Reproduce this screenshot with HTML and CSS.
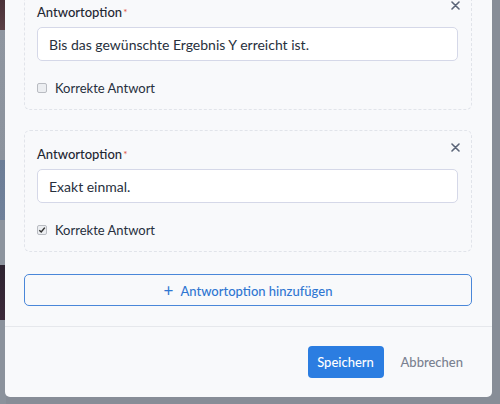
FILE: index.html
```html
<!DOCTYPE html>
<html lang="de">
<head>
    <meta charset="UTF-8">
    <meta name="viewport" content="width=device-width, initial-scale=1.0">
    <title>Antwortoptionen</title>
    <link rel="stylesheet" href="styles.css">
</head>
<body>
    <div class="modal">
        <div class="modal-body">
            <div class="option">
                <button class="remove" type="button">
                    <svg width="9" height="9" viewBox="0 0 9 9"><path d="M1 1L8 8M8 1L1 8" stroke="#5b6578" stroke-width="1.6" stroke-linecap="round"/></svg>
                </button>
                <label class="field-label">Antwortoption<span class="req">*</span></label>
                <input type="text" class="field" value="Bis das gewünschte Ergebnis Y erreicht ist.">
                <label class="check">
                    <span class="box"></span>Korrekte Antwort
                </label>
            </div>
            <div class="option">
                <button class="remove" type="button">
                    <svg width="9" height="9" viewBox="0 0 9 9"><path d="M1 1L8 8M8 1L1 8" stroke="#5b6578" stroke-width="1.6" stroke-linecap="round"/></svg>
                </button>
                <label class="field-label">Antwortoption<span class="req">*</span></label>
                <input type="text" class="field" value="Exakt einmal.">
                <label class="check">
                    <span class="box checked">
                        <svg width="8" height="8" viewBox="0 0 8 8"><path d="M1.3 4.2L3.2 6L6.8 1.6" fill="none" stroke="#333" stroke-width="1.5"/></svg>
                    </span>Korrekte Antwort
                </label>
            </div>
            <button class="add" type="button"><span class="plus">+</span>Antwortoption hinzufügen</button>
        </div>
        <div class="modal-footer">
            <button class="save" type="button">Speichern</button>
            <button class="cancel" type="button">Abbrechen</button>
        </div>
    </div>
</body>
</html>
```

FILE: styles.css
```css
html,body{
    margin:0;
    height:100%;
    overflow:hidden;
}
body{
    font-family: Lato, "Noto Sans", sans-serif;
    color:#27303d;
    background:
        linear-gradient(to bottom,
            #4a3238 0, #5b4046 30px,
            #8f96a0 30px, #8c939d 160px,
            #6c7d96 160px, #70819a 220px,
            #8d949e 220px, #8d949e 265px,
            #2e2431 265px, #3c2a3a 320px,
            #8b929c 320px) left top / 6px 100% no-repeat,
        #878d97;
}
.modal{
    margin:-40px 8px 0 5px;
    width:487px;
    background:#f8f9fb;
    border-radius:0 0 5px 5px;
}
.modal-body{
    padding:28px 20px 20px 19px;
}
.option{
    position:relative;
    border:1px dashed #e1e4ea;
    border-radius:6px;
    padding:15px 13px 13px 12px;
    margin-bottom:20px;
}
.remove{
    position:absolute;
    top:7px;
    right:9px;
    border:none;
    background:none;
    padding:2px;
    cursor:pointer;
}
.field-label{
    display:block;
    font-size:13px;
    font-weight:500;
    color:#1f2733;
    line-height:16px;
}
.req{
    color:#e0573f;
    font-size:10px;
    vertical-align:top;
    margin-left:1px;
}
.field{
    display:block;
    box-sizing:border-box;
    width:100%;
    height:34px;
    margin-top:7px;
    padding:0 11px;
    border:1px solid #d5d8e8;
    border-radius:5px;
    background:#fff;
    font-family:inherit;
    font-size:14px;
    color:#27303d;
}
.check{
    display:flex;
    align-items:center;
    margin-top:19px;
    font-size:13px;
    line-height:16px;
    cursor:pointer;
}
.box{
    display:inline-flex;
    align-items:center;
    justify-content:center;
    box-sizing:border-box;
    width:10px;
    height:10px;
    margin-right:8px;
    border:1px solid #b9bcc2;
    border-radius:2px;
    background:#eceef1;
}
.add{
    display:block;
    width:100%;
    height:32px;
    margin-top:22px;
    border:1.5px solid #4a87d9;
    border-radius:5px;
    background:#f8f9fb;
    color:#2f76d2;
    font-family:inherit;
    font-size:13px;
    font-weight:500;
    cursor:pointer;
}
.plus{
    font-size:17px;
    font-weight:normal;
    margin-right:7px;
    vertical-align:-1px;
}
.modal-footer{
    display:flex;
    justify-content:flex-end;
    align-items:center;
    border-top:1px solid #e6e8ec;
    padding:19px 23px 19px 0;
}
.save{
    width:76px;
    height:32px;
    border:none;
    border-radius:4px;
    background:#2b7de1;
    color:#fff;
    font-family:inherit;
    font-size:13px;
    font-weight:500;
    cursor:pointer;
}
.cancel{
    margin-left:11px;
    border:none;
    background:none;
    color:#7a8190;
    font-family:inherit;
    font-size:13px;
    font-weight:500;
    cursor:pointer;
}
```
